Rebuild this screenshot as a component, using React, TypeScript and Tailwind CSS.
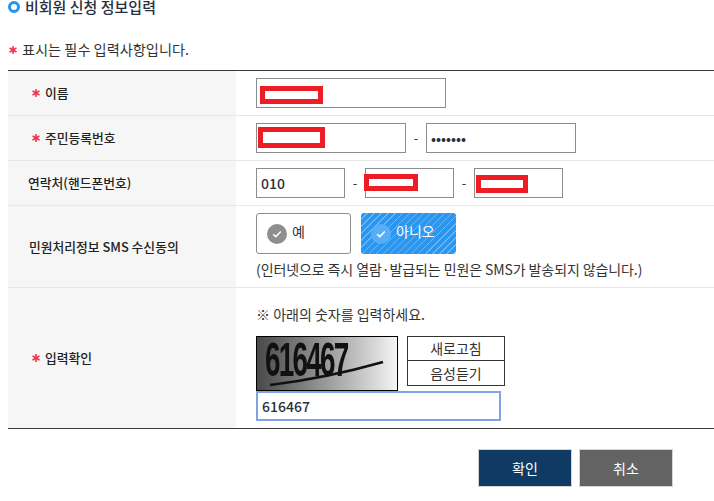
import React from 'react';

const font = { fontFamily: '"Noto Sans CJK KR", "Liberation Sans", sans-serif' };

function Star() {
    return (
        <svg width="8" height="8" viewBox="0 0 8 8" className="shrink-0">
            <g stroke="#f0384f" strokeWidth="1.7" strokeLinecap="round">
                <path d="M4 .8v6.4" />
                <path d="M1.1 2.3l5.8 3.4" />
                <path d="M6.9 2.3L1.1 5.7" />
            </g>
        </svg>
    );
}

function Redact({ className }: { className: string }) {
    return <div className={`absolute border-[5px] border-[#ee1c25] bg-white ${className}`} />;
}

function Field({ w, value, children }: { w: string; value?: string; children?: React.ReactNode }) {
    return (
        <div className={`relative h-[30px] ${w} border border-[#8c8c8c] bg-white flex items-center pl-[4px] text-[14px] leading-none font-medium text-[#2b2f3a]`}>
            {value}
            {children}
        </div>
    );
}

function Row({ label, star, h, indent, children, last }: { label: string; star?: boolean; h: string; indent: string; children: React.ReactNode; last?: boolean }) {
    return (
        <div className={`flex ${h} ${last ? '' : 'border-b border-[#e8e8e8]'}`}>
            <div className={`w-[228px] shrink-0 bg-[#f6f6f6] flex items-center gap-[5px] ${indent} text-[12.8px] font-medium text-[#222]`}>
                {star && <Star />}
                <span>{label}</span>
            </div>
            <div className="flex-1 pl-[20px]">{children}</div>
        </div>
    );
}

function Dash() {
    return <span className="w-[20px] text-center text-[13px] text-[#333]">-</span>;
}

function CheckDot({ bg }: { bg: string }) {
    return (
        <span className={`w-[20px] h-[20px] rounded-full ${bg} flex items-center justify-center`}>
            <svg width="10" height="8" viewBox="0 0 10 8" fill="none">
                <path d="M1.2 4.2l2.6 2.4L8.8 1.4" stroke="white" strokeWidth="1.5" />
            </svg>
        </span>
    );
}

export default function App() {
    return (
        <div className="w-[714px] h-[501px] bg-white overflow-hidden" style={font}>
            <div className="h-[40px] pl-[8px] flex items-start">
                <div className="mt-[1px] w-[12px] h-[12px] rounded-full border-[3px] border-[#2196f3]" />
                <span className="ml-[5px] text-[15px] leading-[14px] font-medium text-[#2a2f3c]">비회원 신청 정보입력</span>
            </div>
            <div className="h-[30px] pl-[9px] flex items-start gap-[5px] text-[14.2px] leading-[18px] text-[#333]">
                <span className="mt-[6px] flex"><Star /></span>
                <span>표시는 필수 입력사항입니다.</span>
            </div>

            <div className="ml-[8px] border-t border-b border-[#3a3a3a]">
                <Row label="이름" star h="h-[45px]" indent="pl-[24px]">
                    <div className="pt-[7px]">
                        <Field w="w-[190px]">
                            <Redact className="left-[3px] top-[7px] w-[63px] h-[18px]" />
                        </Field>
                    </div>
                </Row>
                <Row label="주민등록번호" star h="h-[45px]" indent="pl-[24px]">
                    <div className="pt-[7px] flex items-center">
                        <Field w="w-[150px]">
                            <Redact className="left-[1px] top-[3px] w-[67px] h-[21px]" />
                        </Field>
                        <Dash />
                        <Field w="w-[150px]" value="•••••••" />
                    </div>
                </Row>
                <Row label="연락처(핸드폰번호)" h="h-[45px]" indent="pl-[20px]">
                    <div className="pt-[7px] flex items-center">
                        <Field w="w-[89px]" value="010" />
                        <Dash />
                        <Field w="w-[89px]">
                            <Redact className="-left-[2px] top-[5px] w-[54px] h-[17px]" />
                        </Field>
                        <Dash />
                        <Field w="w-[89px]">
                            <Redact className="left-[1px] top-[6px] w-[52px] h-[18px]" />
                        </Field>
                    </div>
                </Row>
                <Row label="민원처리정보 SMS 수신동의" h="h-[82px]" indent="pl-[21px]">
                    <div className="pt-[7px]">
                        <div className="flex gap-[10px]">
                            <div className="w-[95px] h-[41px] rounded-[3px] border border-[#8c8c8c] flex items-center pl-[10px] gap-[5px] text-[14px] text-[#333]">
                                <CheckDot bg="bg-[#8e8e8e]" />
                                <span className="-mt-[4px]">예</span>
                            </div>
                            <div className="w-[95px] h-[41px] rounded-[3px] bg-[#2a96f0] bg-[repeating-linear-gradient(135deg,transparent_0,transparent_4px,rgba(255,255,255,0.3)_4px,rgba(255,255,255,0.3)_5px)] flex items-center pl-[10px] gap-[5px] text-[14px] text-white">
                                <CheckDot bg="bg-[#58aef5]" />
                                <span className="-mt-[4px]">아니오</span>
                            </div>
                        </div>
                        <p className="mt-[6px] text-[14px] leading-[18px] tracking-[-0.1px] text-[#333] whitespace-nowrap">(인터넷으로 즉시 열람·발급되는 민원은 SMS가 발송되지 않습니다.)</p>
                    </div>
                </Row>
                <Row label="입력확인" star h="h-[140px]" indent="pl-[24px]" last>
                    <div className="pt-[17px]">
                        <p className="text-[14px] leading-[18px] text-[#333]">※ 아래의 숫자를 입력하세요.</p>
                        <div className="mt-[13px] flex gap-[9px]">
                            <div className="relative w-[142px] h-[55px] border border-black bg-gradient-to-r from-[#4a4a4a] to-[#f5f5f5]">
                                <span className="absolute left-[8px] top-0 text-[48px] leading-[46px] font-bold tracking-[-3px] text-[#111] scale-x-[0.58] origin-left blur-[0.4px]" style={{ fontFamily: '"Liberation Sans", sans-serif' }}>616467</span>
                                <svg className="absolute left-0 top-0" width="140" height="53" viewBox="0 0 140 53">
                                    <path d="M13 48Q70 41 126 25" stroke="#111" strokeWidth="2.5" fill="none" />
                                </svg>
                            </div>
                            <div className="w-[98px]">
                                <div className="h-[25px] border border-[#333] flex items-center justify-center text-[14px] text-[#333]">새로고침</div>
                                <div className="h-[25px] border border-t-0 border-[#333] flex items-center justify-center text-[14px] text-[#333]">음성듣기</div>
                            </div>
                        </div>
                        <div className="w-[245px] h-[30px] border-2 border-[#7fa3e3] flex items-center pl-[4px] text-[14px] font-medium text-[#2b2f3a]">616467</div>
                    </div>
                </Row>
            </div>

            <div className="mt-[20px] pl-[478px] flex gap-[7px]">
                <div className="w-[94px] h-[38px] border border-[#d4d4d4] bg-[#0e3a63] flex items-center justify-center text-[14px] text-white">확인</div>
                <div className="w-[94px] h-[38px] border border-[#d4d4d4] bg-[#636363] flex items-center justify-center text-[14px] text-white">취소</div>
            </div>
        </div>
    );
}
